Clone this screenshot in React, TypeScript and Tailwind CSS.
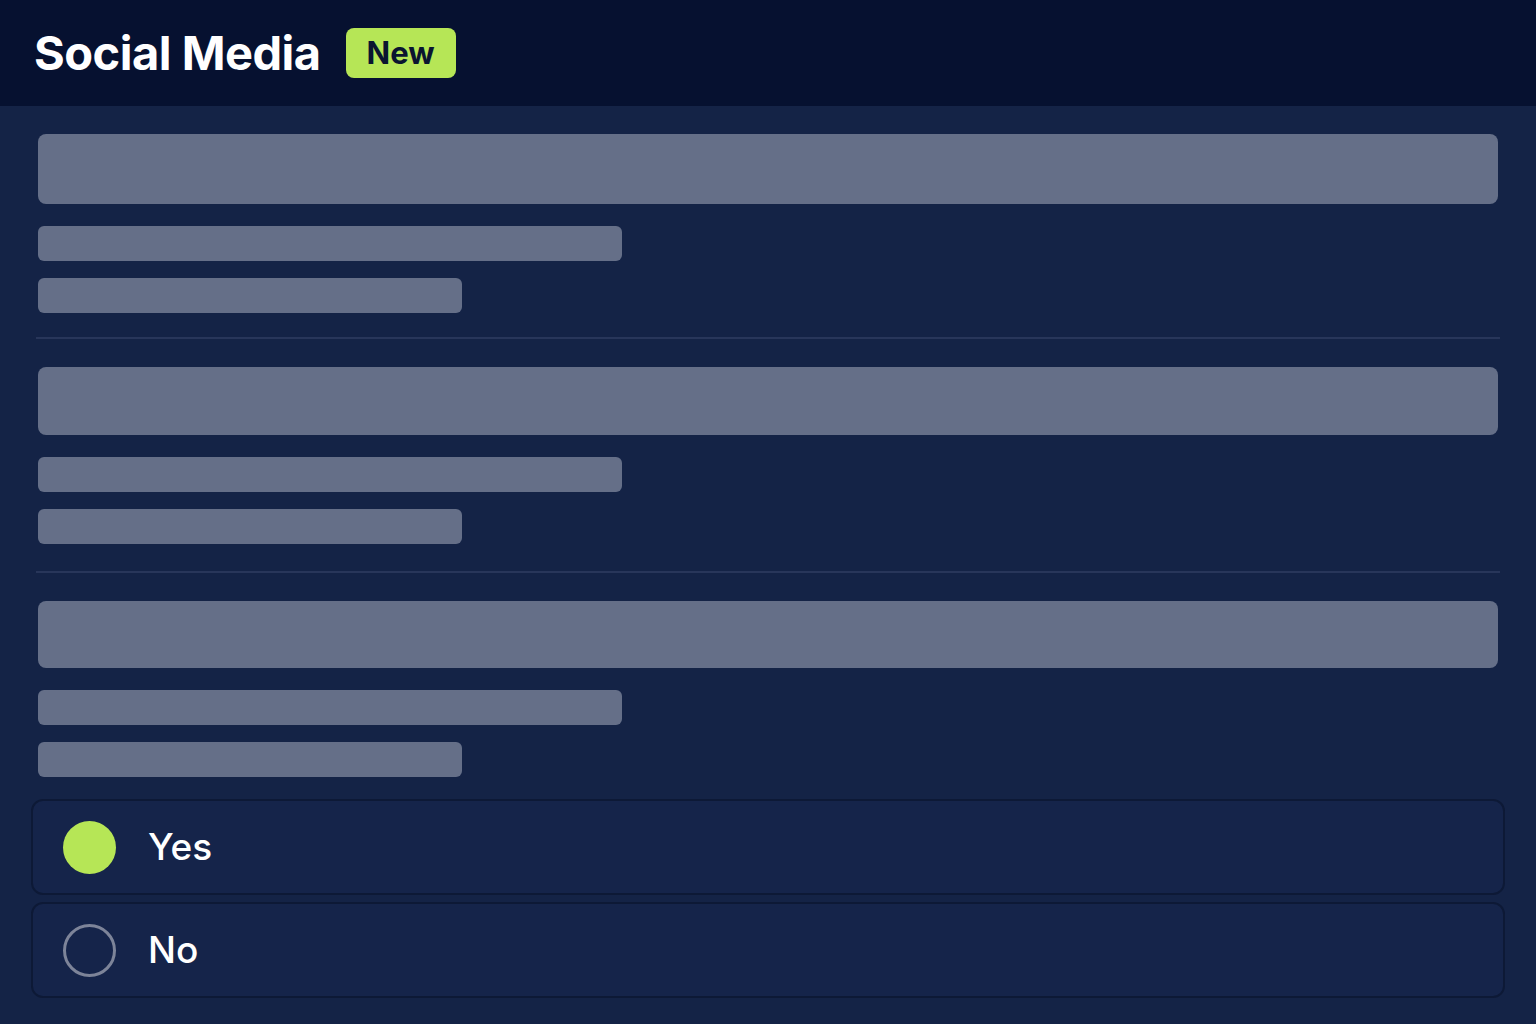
import React from 'react';

const Block = ({ big = 'h-[68px]' }: { big?: string }) => (
  <div className="flex flex-col">
    <div className={`${big} w-full rounded-lg bg-[#656f88]`} />
    <div className="mt-[22px] h-[35px] w-[584px] rounded-md bg-[#656f88]" />
    <div className="mt-[17px] h-[35px] w-[424px] rounded-md bg-[#656f88]" />
  </div>
);

const Option = ({ label, selected }: { label: string; selected?: boolean }) => (
  <div className="flex h-[96px] items-center rounded-xl border-2 border-[#0d1936] bg-[#15244a] pl-[30px]">
    {selected ? (
      <div className="h-[53px] w-[53px] rounded-full bg-[#b6e656]" />
    ) : (
      <div className="h-[53px] w-[53px] rounded-full border-[3px] border-[#7d8499]" />
    )}
    <span className="ml-[32px] text-[37px] font-medium text-white">{label}</span>
  </div>
);

export default function App() {
  return (
    <div className="min-h-[1024px] w-full bg-[#142346]" style={{ fontFamily: 'Inter, "Noto Sans", sans-serif' }}>
      <header className="flex h-[106px] items-center bg-[#061130] pl-[34px]">
        <h1 className="text-[47px] font-bold tracking-[-0.5px] text-white">Social Media</h1>
        <span className="ml-[25px] flex h-[50px] items-center rounded-lg bg-[#b6e656] px-[21px] text-[31px] font-bold text-[#0a1530]">
          New
        </span>
      </header>
      <main className="px-[36px] pt-[28px]">
        <div className="px-[2px]">
          <Block big="h-[70px]" />
        </div>
        <div className="mt-[24px] h-[2px] bg-[#28365a]" />
        <div className="mt-[28px] px-[2px]">
          <Block />
        </div>
        <div className="mt-[27px] h-[2px] bg-[#28365a]" />
        <div className="mt-[28px] px-[2px]">
          <Block big="h-[67px]" />
        </div>
      </main>
      <div className="mt-[22px] flex flex-col gap-[7px] px-[31px]">
        <Option label="Yes" selected />
        <Option label="No" />
      </div>
    </div>
  );
}
